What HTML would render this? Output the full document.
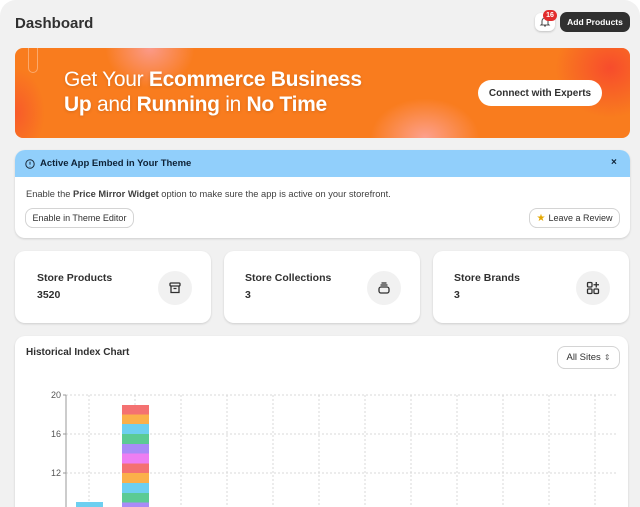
<!DOCTYPE html>
<html><head><meta charset="utf-8"><style>
*{box-sizing:border-box;margin:0;padding:0}
html,body{width:640px;height:507px;overflow:hidden;background:#fff;font-family:"Liberation Sans",sans-serif;color:#303030}
.frame{position:absolute;left:0;top:0;width:640px;height:507px;background:#f1f1f1;border-radius:16px 16px 0 0;overflow:hidden}
.abs{position:absolute}
.card{position:absolute;background:#fff;border-radius:10px;box-shadow:0 1px 2px rgba(0,0,0,.15)}
.btn{position:absolute;background:#fff;border-radius:7px;box-shadow:0 0 0 1px #d4d4d4,0 1px 0 #bbb;font-size:9px;color:#303030;display:flex;align-items:center;justify-content:center}
.lbl{font-size:10.5px;font-weight:bold;color:#303030}
.circ{position:absolute;width:34px;height:34px;border-radius:50%;background:#f1f1f1;display:flex;align-items:center;justify-content:center}
</style></head><body><div class="frame">
<div class="abs" style="left:15px;top:15px;font-size:15px;font-weight:bold;color:#303030">Dashboard</div>
<div class="abs" style="left:535px;top:13px;width:20px;height:18px;background:#fff;border-radius:6px;box-shadow:0 1px 2px rgba(0,0,0,.2)"></div>
<svg class="abs" style="left:539px;top:15px" width="12" height="14" viewBox="0 0 12 14"><path d="M3 9V6a3 3 0 016 0v3l1 1H2z M5 11h2" fill="none" stroke="#555" stroke-width="1.1"/></svg>
<div class="abs" style="left:543px;top:10px;width:14px;height:11px;border-radius:6px;background:#e22c2c;color:#fff;font-size:7px;font-weight:bold;text-align:center;line-height:11px">16</div>
<div class="abs" style="left:560px;top:12px;width:70px;height:20px;background:#303030;border-radius:7px;color:#fff;font-size:8.5px;font-weight:bold;text-align:center;line-height:20px">Add Products</div>

<div class="abs" style="left:15px;top:48px;width:615px;height:90px;border-radius:8px;overflow:hidden;background:#f97c1e">
<div class="abs" style="left:90px;top:-40px;width:90px;height:80px;border-radius:50%;background:radial-gradient(#fb9a8a,rgba(249,124,30,0) 70%)"></div>
<div class="abs" style="left:-30px;top:20px;width:60px;height:90px;background:radial-gradient(#f85a2a,rgba(249,124,30,0) 70%)"></div>
<div class="abs" style="left:355px;top:50px;width:110px;height:80px;background:radial-gradient(#fda08e,rgba(249,124,30,0) 70%)"></div>
<div class="abs" style="left:540px;top:-30px;width:110px;height:100px;background:radial-gradient(#f74c2c,rgba(249,124,30,0) 70%)"></div>
<div class="abs" style="left:13px;top:-10px;width:10px;height:35px;border:1px solid rgba(255,255,255,.35);border-radius:6px"></div>
<div class="abs" style="left:49px;top:19px;font-size:21px;color:#fff;line-height:25px;letter-spacing:-.3px;text-shadow:0 1px 3px rgba(0,0,0,.15)">Get Your <b>Ecommerce Business</b><br><b>Up</b> and <b>Running</b> in <b>No Time</b></div>
<div class="abs" style="left:463px;top:32px;width:124px;height:26px;background:#fff;border-radius:13px;font-size:10px;font-weight:bold;color:#303030;display:flex;align-items:center;justify-content:center">Connect with Experts</div>
</div>

<div class="card" style="left:15px;top:150px;width:615px;height:88px;overflow:hidden">
<div class="abs" style="left:0;top:0;width:615px;height:27px;background:#91cffb"></div>
<svg class="abs" style="left:10px;top:9px" width="10" height="10" viewBox="0 0 10 10"><circle cx="5" cy="5" r="4.2" fill="none" stroke="#1a2a3a" stroke-width="1"/><path d="M5 2.8v2.8M5 7v.4" stroke="#1a2a3a" stroke-width="1"/></svg>
<div class="abs" style="left:25px;top:8px;font-size:9.5px;font-weight:bold;color:#0e2236">Active App Embed in Your Theme</div>
<div class="abs" style="left:596px;top:7px;font-size:10px;font-weight:bold;color:#0e2236">×</div>
<div class="abs" style="left:11px;top:39px;font-size:9.3px;color:#404040">Enable the <b>Price Mirror Widget</b> option to make sure the app is active on your storefront.</div>
<div class="btn" style="left:11px;top:59px;width:107px;height:18px">Enable in Theme Editor</div>
<div class="btn" style="left:515px;top:59px;width:89px;height:18px"><span style="color:#e5a800;font-size:10px;margin-right:3px">★</span>Leave a Review</div>
</div>

<div class="card" style="left:15px;top:251px;width:196px;height:72px"><div class="abs lbl" style="left:22px;top:21px">Store Products</div><div class="abs lbl" style="left:22px;top:38px">3520</div>
<div class="circ" style="left:143px;top:20px"><svg width="14" height="14" viewBox="0 0 14 14" fill="none" stroke="#303030" stroke-width="1.3"><rect x="2" y="2" width="10" height="3" rx="1"/><path d="M3 5v6.5h8V5M5.5 7.5h3"/></svg></div></div>
<div class="card" style="left:224px;top:251px;width:196px;height:72px"><div class="abs lbl" style="left:21px;top:21px">Store Collections</div><div class="abs lbl" style="left:21px;top:38px">3</div>
<div class="circ" style="left:143px;top:20px"><svg width="14" height="14" viewBox="0 0 14 14" fill="none" stroke="#303030" stroke-width="1.3"><path d="M4.5 2h5M3.5 4h7"/><rect x="2" y="6" width="10" height="6" rx="2"/></svg></div></div>
<div class="card" style="left:433px;top:251px;width:196px;height:72px"><div class="abs lbl" style="left:21px;top:21px">Store Brands</div><div class="abs lbl" style="left:21px;top:38px">3</div>
<div class="circ" style="left:143px;top:20px"><svg width="14" height="14" viewBox="0 0 14 14" fill="none" stroke="#303030" stroke-width="1.3"><rect x="1.5" y="1.5" width="4.5" height="4.5" rx="1"/><rect x="1.5" y="8" width="4.5" height="4.5" rx="1"/><rect x="8" y="8" width="4.5" height="4.5" rx="1"/><path d="M10.25 1v5.5M7.5 3.75h5.5"/></svg></div></div>

<div class="card" style="left:15px;top:336px;width:613px;height:190px">
<div class="abs lbl" style="left:11px;top:11px;font-size:10px">Historical Index Chart</div>
<div class="btn" style="left:543px;top:11px;width:61px;height:21px;font-size:9.5px">All Sites <span style="font-size:8px;margin-left:3px;color:#666">⇕</span></div>
</div>
<svg class="abs" style="left:0;top:380px" width="640" height="127">
<g stroke="#d8d8d8" stroke-dasharray="2,2" stroke-width="1">
<line x1="66" y1="15" x2="618" y2="15"/><line x1="66" y1="54" x2="618" y2="54"/><line x1="66" y1="93" x2="618" y2="93"/>
<line x1="89" y1="15" x2="89" y2="127"/><line x1="135" y1="15" x2="135" y2="127"/><line x1="181" y1="15" x2="181" y2="127"/><line x1="227" y1="15" x2="227" y2="127"/><line x1="273" y1="15" x2="273" y2="127"/><line x1="319" y1="15" x2="319" y2="127"/><line x1="365" y1="15" x2="365" y2="127"/><line x1="411" y1="15" x2="411" y2="127"/><line x1="457" y1="15" x2="457" y2="127"/><line x1="503" y1="15" x2="503" y2="127"/><line x1="549" y1="15" x2="549" y2="127"/><line x1="595" y1="15" x2="595" y2="127"/>
</g>
<line x1="66" y1="15" x2="66" y2="127" stroke="#999"/>
<g stroke="#999"><line x1="63" y1="15" x2="66" y2="15"/><line x1="63" y1="54" x2="66" y2="54"/><line x1="63" y1="93" x2="66" y2="93"/></g>
<g font-family="Liberation Sans" font-size="9" fill="#555" text-anchor="end"><text x="61" y="18">20</text><text x="61" y="57">16</text><text x="61" y="96">12</text></g>
<rect x="76" y="122" width="27" height="5" fill="#6dcff0"/>
<g>
<rect x="122" y="25" width="27" height="9.5" fill="#f47171"/><rect x="122" y="34.5" width="27" height="9.5" fill="#fbb04a"/><rect x="122" y="44" width="27" height="10" fill="#6dcff0"/><rect x="122" y="54" width="27" height="10" fill="#5bcb94"/><rect x="122" y="64" width="27" height="9.5" fill="#a98bf7"/><rect x="122" y="73.5" width="27" height="10" fill="#ee7ef2"/><rect x="122" y="83.5" width="27" height="9.5" fill="#f47171"/><rect x="122" y="93" width="27" height="10" fill="#fbb04a"/><rect x="122" y="103" width="27" height="10" fill="#6dcff0"/><rect x="122" y="113" width="27" height="9.5" fill="#5bcb94"/><rect x="122" y="122.5" width="27" height="5" fill="#a98bf7"/>
</g>
</svg>
</div></body></html>
